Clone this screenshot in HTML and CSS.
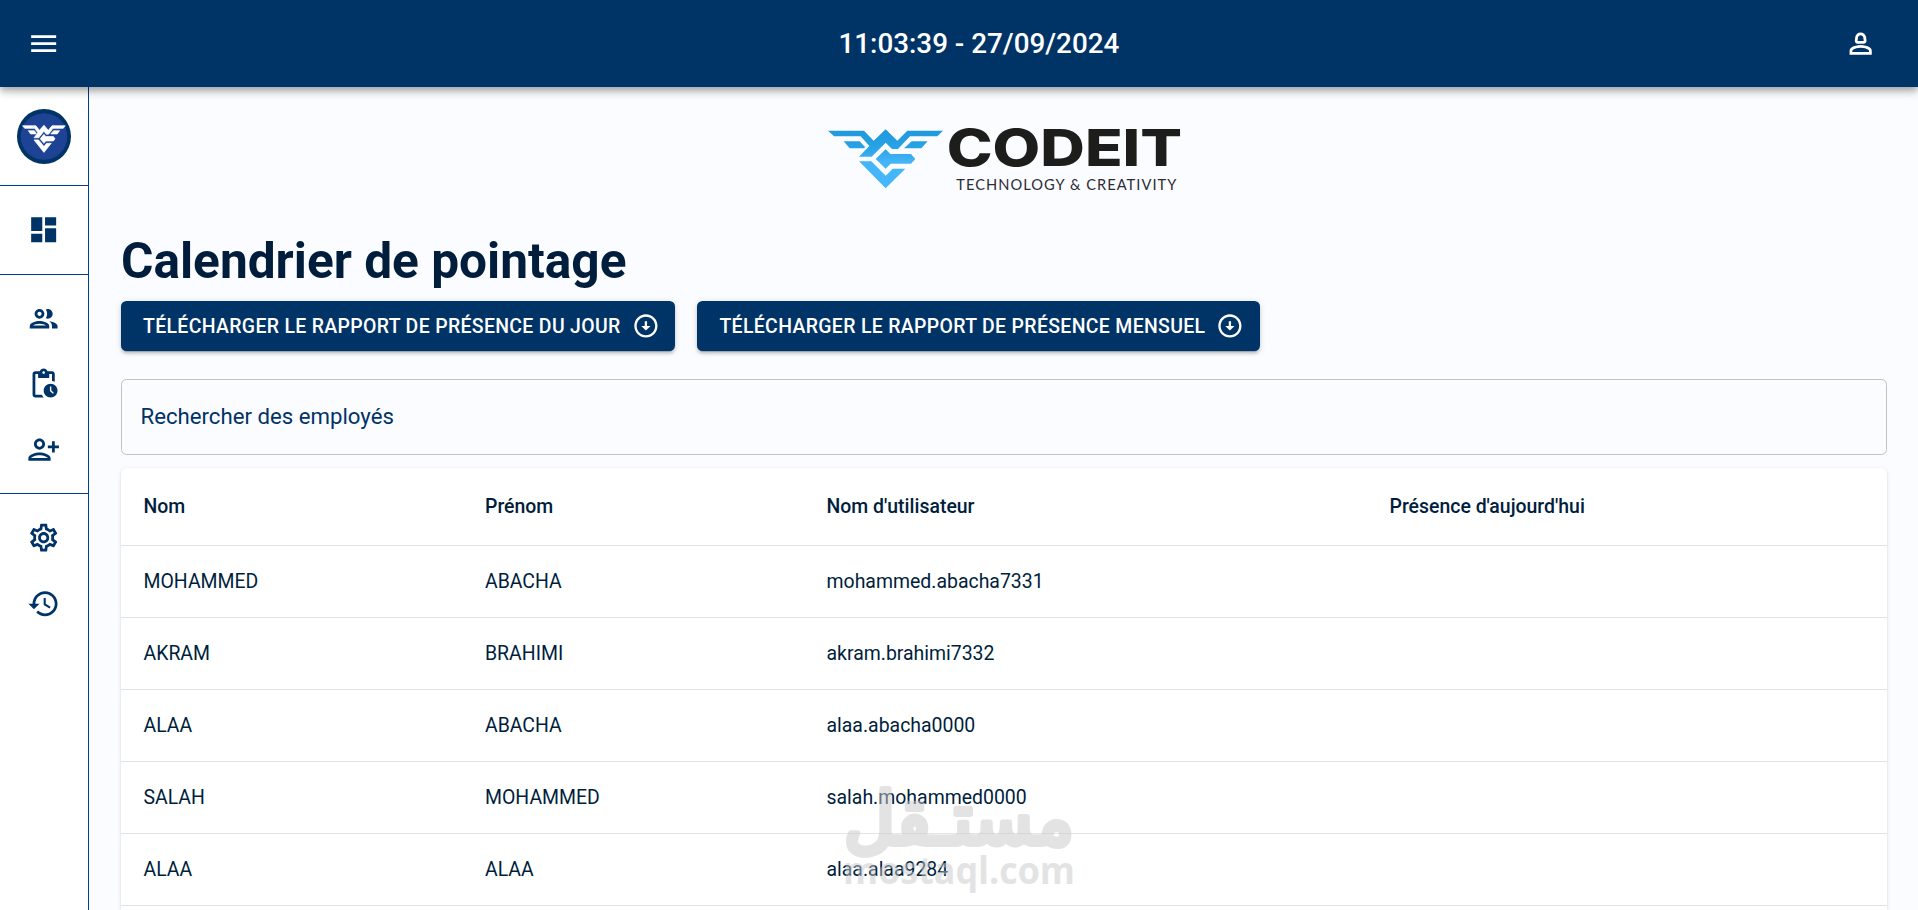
FILE: index.html
```
<!DOCTYPE html>
<html lang="fr">
<head>
    <meta charset="UTF-8" />
    <meta name="viewport" content="width=device-width, initial-scale=1.0" />
    <title>Calendrier de pointage</title>
    <link rel="stylesheet" href="styles.css">
</head>
<body>
    <header class="topbar">
        <button class="icon-button" aria-label="Menu">
            <svg class="icon" viewBox="0 0 24 24"><path d="M3 18h18v-2H3v2zm0-5h18v-2H3v2zm0-7v2h18V6H3z"/></svg>
        </button>
        <div class="clock">11:03:39 - 27/09/2024</div>
        <button class="icon-button" aria-label="Profil">
            <svg class="icon" viewBox="0 0 24 24"><path d="M18.39 14.56C16.71 13.7 14.53 13 12 13s-4.71.7-6.39 1.56C4.61 15.07 4 16.1 4 17.22V20h16v-2.78c0-1.12-.61-2.15-1.61-2.66zM18 18H6v-.78c0-.38.2-.72.52-.88C7.71 15.73 9.63 15 12 15c2.37 0 4.29.73 5.48 1.34.32.16.52.5.52.88V18zM9.78 12h4.44c1.21 0 2.14-1.06 1.98-2.26l-.32-2.45C15.57 5.39 13.92 4 12 4S8.43 5.39 8.12 7.29l-.32 2.45c-.16 1.2.77 2.26 1.98 2.26zm.32-4.39c.16-.94.96-1.61 1.9-1.61s1.74.67 1.9 1.61l.32 2.39H9.78l.32-2.39z"/></svg>
        </button>
    </header>

    <div class="layout">
        <nav class="sidebar">
            <div class="sidebar-logo">
                <svg class="badge" viewBox="0 0 54 55">
                    <ellipse cx="27" cy="27.5" rx="27" ry="27.5" fill="#003366"/>
                    <circle cx="27" cy="27.5" r="23.3" fill="#1e4394"/>
                    <g transform="translate(-1.2 7.2) scale(.124 .154)" fill="#fff" stroke="#fff" stroke-width="5">
                        <use href="#eagle"/>
                    </g>
                </svg>
            </div>
            <div class="sidebar-group">
                <a class="nav-item" href="#"><svg class="icon" viewBox="0 0 24 24"><path d="M3 13h8V3H3v10zm0 8h8v-6H3v6zm10 0h8V11h-8v10zm0-18v6h8V3h-8z"/></svg></a>
            </div>
            <div class="sidebar-group">
                <a class="nav-item" href="#"><svg class="icon" viewBox="0 0 24 24"><path d="M9 13.75c-2.34 0-7 1.17-7 3.5V19h14v-1.75c0-2.33-4.66-3.5-7-3.5zM4.34 17c.84-.58 2.87-1.25 4.66-1.25s3.82.67 4.66 1.25H4.34zM9 12c1.93 0 3.5-1.57 3.5-3.5S10.93 5 9 5 5.5 6.57 5.5 8.5 7.07 12 9 12zm0-5c.83 0 1.5.67 1.5 1.5S9.83 10 9 10s-1.5-.67-1.5-1.5S8.17 7 9 7zm7.04 6.81c1.16.84 1.96 1.96 1.96 3.44V19h4v-1.75c0-2.02-3.5-3.17-5.96-3.44zM15 12c1.93 0 3.5-1.57 3.5-3.5S16.93 5 15 5c-.54 0-1.04.13-1.5.35.63.89 1 1.98 1 3.15s-.37 2.26-1 3.15c.46.22.96.35 1.5.35z"/></svg></a>
                <a class="nav-item" href="#"><svg class="icon" viewBox="0 0 24 24"><path d="M17 12c-2.76 0-5 2.24-5 5s2.24 5 5 5 5-2.24 5-5-2.24-5-5-5zm1.65 7.35L16.5 17.2V14h1v2.79l1.85 1.85-.7.71zM18 3h-3.18C14.4 1.84 13.3 1 12 1s-2.4.84-2.82 2H6c-1.1 0-2 .9-2 2v15c0 1.1.9 2 2 2h6.11c-.59-.57-1.07-1.25-1.42-2H6V5h2v3h8V5h2v5.08c.71.1 1.38.31 2 .6V5c0-1.1-.9-2-2-2zm-6 2c-.55 0-1-.45-1-1s.45-1 1-1 1 .45 1 1-.45 1-1 1z"/></svg></a>
                <a class="nav-item" href="#"><svg class="icon" viewBox="0 0 24 24"><path d="M13 8c0-2.21-1.79-4-4-4S5 5.79 5 8s1.79 4 4 4 4-1.79 4-4zm-2 0c0 1.1-.9 2-2 2s-2-.9-2-2 .9-2 2-2 2 .9 2 2zM1 18v2h16v-2c0-2.66-5.33-4-8-4s-8 1.34-8 4zm2 0c.2-.71 3.3-2 6-2 2.69 0 5.77 1.28 6 2H3zm17-4v-3h3V9h-3V6h-2v3h-3v2h3v3h2z"/></svg></a>
            </div>
            <div class="sidebar-group">
                <a class="nav-item" href="#"><svg class="icon" viewBox="0 0 24 24"><path d="M19.43 12.98c.04-.32.07-.64.07-.98 0-.34-.03-.66-.07-.98l2.11-1.65c.19-.15.24-.42.12-.64l-2-3.46c-.09-.16-.26-.25-.44-.25-.06 0-.12.01-.17.03l-2.49 1c-.52-.4-1.08-.73-1.69-.98l-.38-2.65C14.46 2.18 14.25 2 14 2h-4c-.25 0-.46.18-.49.42l-.38 2.65c-.61.25-1.17.59-1.69.98l-2.49-1c-.06-.02-.12-.03-.18-.03-.17 0-.34.09-.43.25l-2 3.46c-.13.22-.07.49.12.64l2.11 1.65c-.04.32-.07.65-.07.98 0 .33.03.66.07.98l-2.11 1.65c-.19.15-.24.42-.12.64l2 3.46c.09.16.26.25.44.25.06 0 .12-.01.17-.03l2.49-1c.52.4 1.08.73 1.69.98l.38 2.65c.03.24.24.42.49.42h4c.25 0 .46-.18.49-.42l.38-2.65c.61-.25 1.17-.59 1.69-.98l2.49 1c.06.02.12.03.18.03.17 0 .34-.09.43-.25l2-3.46c.12-.22.07-.49-.12-.64l-2.11-1.65zm-1.98-1.71c.04.31.05.52.05.73 0 .21-.02.43-.05.73l-.14 1.13.89.7 1.08.84-.7 1.21-1.27-.51-1.04-.42-.9.68c-.43.32-.84.56-1.25.73l-1.06.43-.16 1.13-.2 1.35h-1.4l-.19-1.35-.16-1.13-1.06-.43c-.43-.18-.83-.41-1.23-.71l-.91-.7-1.06.43-1.27.51-.7-1.21 1.08-.84.89-.7-.14-1.13c-.03-.31-.05-.54-.05-.74s.02-.43.05-.73l.14-1.13-.89-.7-1.08-.84.7-1.21 1.27.51 1.04.42.9-.68c.43-.32.84-.56 1.25-.73l1.06-.43.16-1.13.2-1.35h1.39l.19 1.35.16 1.13 1.06.43c.43.18.83.41 1.23.71l.91.7 1.06-.43 1.27-.51.7 1.21-1.07.85-.89.7.14 1.13zM12 8c-2.21 0-4 1.79-4 4s1.79 4 4 4 4-1.79 4-4-1.79-4-4-4zm0 6c-1.1 0-2-.9-2-2s.9-2 2-2 2 .9 2 2-.9 2-2 2z"/></svg></a>
                <a class="nav-item" href="#"><svg class="icon" viewBox="0 0 24 24"><path d="M13 3c-4.97 0-9 4.03-9 9H1l4 3.99L9 12H6c0-3.87 3.13-7 7-7s7 3.13 7 7-3.13 7-7 7c-1.93 0-3.68-.79-4.94-2.06l-1.42 1.42C8.27 19.99 10.51 21 13 21c4.97 0 9-4.03 9-9s-4.03-9-9-9zm-1 5v5l4.25 2.52.77-1.28-3.52-2.09V8z"/></svg></a>
            </div>
        </nav>

        <main class="content">
            <svg class="brand" viewBox="0 0 1170 300">
                <defs>
                    <linearGradient id="sky" gradientUnits="userSpaceOnUse" x1="0" y1="60" x2="0" y2="235">
                        <stop offset="0" stop-color="#1f98dc"/>
                        <stop offset=".3" stop-color="#28a3e6"/>
                        <stop offset=".55" stop-color="#45b5f7"/>
                        <stop offset="1" stop-color="#45b8fa"/>
                    </linearGradient>
                    <g id="eagle">
                        <path d="M54 62H162L191 92L227 58L262 92L292 62H399L382 79H300L264 117H246L227 98L185 140H147L178 108L152 79H72Z"/>
                        <path d="M101 94H149L166 112L161 115H119Z"/>
                        <path d="M353 94H305L282 115H334Z"/>
                        <path d="M227 118L241 132H303L316 147L303 161H242L227 176L197 147Z"/>
                        <path d="M147 154H184L227 197L248 176H286L227 235Z"/>
                    </g>
                </defs>
                <use href="#eagle" fill="url(#sky)"/>
                <text class="brand-name" x="410" y="169" textLength="706" lengthAdjust="spacingAndGlyphs">CODEIT</text>
                <text class="brand-tagline" x="439" y="239" textLength="660">TECHNOLOGY &amp; CREATIVITY</text>
            </svg>

            <h1>Calendrier de pointage</h1>

            <div class="actions">
                <button class="download">
                    Télécharger le rapport de présence du jour
                    <svg viewBox="0 0 24 24"><path d="M12 4c4.41 0 8 3.59 8 8s-3.59 8-8 8-8-3.59-8-8 3.59-8 8-8m0-2C6.48 2 2 6.48 2 12s4.48 10 10 10 10-4.48 10-10S17.52 2 12 2zm1 10V8h-2v4H8l4 4 4-4h-3z"/></svg>
                </button>
                <button class="download">
                    Télécharger le rapport de présence mensuel
                    <svg viewBox="0 0 24 24"><path d="M12 4c4.41 0 8 3.59 8 8s-3.59 8-8 8-8-3.59-8-8 3.59-8 8-8m0-2C6.48 2 2 6.48 2 12s4.48 10 10 10 10-4.48 10-10S17.52 2 12 2zm1 10V8h-2v4H8l4 4 4-4h-3z"/></svg>
                </button>
            </div>

            <input class="search" type="text" placeholder="Rechercher des employés" />

            <div class="table-card">
                <table>
                    <thead>
                        <tr>
                            <th class="col-name">Nom</th>
                            <th class="col-name">Prénom</th>
                            <th class="col-user">Nom d'utilisateur</th>
                            <th>Présence d'aujourd'hui</th>
                        </tr>
                    </thead>
                    <tbody>
                        <tr><td>MOHAMMED</td><td>ABACHA</td><td>mohammed.abacha7331</td><td></td></tr>
                        <tr><td>AKRAM</td><td>BRAHIMI</td><td>akram.brahimi7332</td><td></td></tr>
                        <tr><td>ALAA</td><td>ABACHA</td><td>alaa.abacha0000</td><td></td></tr>
                        <tr><td>SALAH</td><td>MOHAMMED</td><td>salah.mohammed0000</td><td></td></tr>
                        <tr><td>ALAA</td><td>ALAA</td><td>alaa.alaa9284</td><td></td></tr>
                    </tbody>
                </table>
            </div>
        </main>
    </div>

    <svg class="watermark" viewBox="0 0 240 130">
        <text class="watermark-ar" x="119" y="64" text-anchor="middle" textLength="230" lengthAdjust="spacingAndGlyphs">مستـقل</text>
        <text class="watermark-en" x="3" y="104" textLength="232" lengthAdjust="spacingAndGlyphs">mostaql.com</text>
    </svg>
</body>
</html>
```
FILE: styles.css
```
* {
    margin: 0;
    padding: 0;
    box-sizing: border-box;
}

body {
    font-family: Roboto, "Liberation Sans", sans-serif;
    background: #fbfcff;
    color: #001e3c;
    height: 100vh;
    overflow: hidden;
    display: flex;
    flex-direction: column;
}

button {
    font-family: inherit;
    border: none;
    cursor: pointer;
}

.icon {
    display: block;
    width: 33.33px;
    height: 33.33px;
    fill: currentColor;
}

/* Top bar */
.topbar {
    position: relative;
    z-index: 10;
    flex: 0 0 87px;
    display: flex;
    align-items: center;
    justify-content: space-between;
    padding: 0 41px 0 26.8px;
    background: #003366;
    color: white;
    box-shadow: 0 3px 6px -1px rgba(0, 0, 0, 0.2),
                0 6px 7px 0 rgba(0, 0, 0, 0.14),
                0 1px 14px 0 rgba(0, 0, 0, 0.12);
}

.icon-button {
    background: none;
    color: inherit;
}

.clock {
    font-size: 27.8px;
    font-weight: 500;
    margin-left: 54px;
}

.layout {
    flex: 1;
    min-height: 0;
    display: flex;
}

/* Sidebar */
.sidebar {
    flex: 0 0 89px;
    background: white;
    border-right: 1px solid #003c8f;
}

.sidebar-logo {
    height: 98px;
    padding: 22px 0 0 17px;
}

.badge {
    display: block;
    width: 54px;
    height: 55px;
}

.sidebar-group {
    border-top: 1px solid #003c8f;
    padding: 11px 0;
}

.nav-item {
    display: flex;
    align-items: center;
    justify-content: center;
    height: 65.5px;
    padding-right: 1px;
    color: #003366;
}

/* Content */
.content {
    flex: 1;
    min-width: 0;
    padding: 23px 31px 0 32px;
}

.brand {
    display: block;
    width: 390px;
    height: 100px;
    margin: 0 auto;
    transform: translateX(1px);
}

.brand-name {
    font-family: Inter, sans-serif;
    font-weight: 800;
    font-size: 154px;
    fill: #1d1d1b;
}

.brand-tagline {
    font-family: Lato, sans-serif;
    font-size: 44px;
    fill: #2c2c35;
}

h1 {
    font-size: 49.6px;
    font-weight: 700;
    line-height: 58px;
    margin: 22px 0 11px;
}

.actions {
    display: flex;
    gap: 22px;
}

.download {
    display: flex;
    align-items: center;
    gap: 11px;
    height: 50px;
    padding: 0 16px 0 22px;
    border-radius: 5.5px;
    background: #003366;
    color: white;
    font-size: 19.44px;
    font-weight: 500;
    letter-spacing: 0.34px;
    text-transform: uppercase;
    box-shadow: 0 4px 1px -3px rgba(0, 0, 0, 0.2),
                0 3px 3px 0 rgba(0, 0, 0, 0.14),
                0 1px 7px 0 rgba(0, 0, 0, 0.12);
}

.download svg {
    width: 27.8px;
    height: 27.8px;
    fill: currentColor;
}

.search {
    display: block;
    width: 100%;
    height: 76px;
    margin: 28px 0 13px;
    padding: 0 18.5px 3px;
    border: 1px solid #bfc1c6;
    border-radius: 5.5px;
    background: transparent;
    font-family: inherit;
    font-size: 22.2px;
}

.search::placeholder {
    color: #003366;
    opacity: 1;
}

.table-card {
    height: 460px;
    background: white;
    border-radius: 6px;
    box-shadow: 0 3px 1px -3px rgba(0, 0, 0, 0.2),
                0 1px 1px 0 rgba(0, 0, 0, 0.14),
                0 1px 4px 0 rgba(0, 0, 0, 0.12);
}

table {
    width: 100%;
    table-layout: fixed;
    border-collapse: separate;
    border-spacing: 0;
}

th,
td {
    height: 72px;
    padding: 0 22px 0 22.5px;
    border-bottom: 1px solid #dfe5ea;
    font-size: 19.44px;
    text-align: left;
}

th {
    height: 78px;
    font-weight: 500;
}

.col-name {
    width: 341.5px;
}

.col-user {
    width: 563px;
}

/* Watermark laid over the page */
.watermark {
    position: absolute;
    left: 840px;
    top: 780px;
    width: 240px;
    height: 130px;
    z-index: 20;
    opacity: 0.5;
    fill: #c8c9cb;
    overflow: visible;
    pointer-events: none;
}

.watermark-ar {
    font-family: "DejaVu Sans", sans-serif;
    font-size: 72px;
    stroke: #c8c9cb;
    stroke-width: 6px;
    stroke-linejoin: round;
}

.watermark-en {
    font-family: "Open Sans", sans-serif;
    font-weight: 700;
    font-size: 37px;
}
```
